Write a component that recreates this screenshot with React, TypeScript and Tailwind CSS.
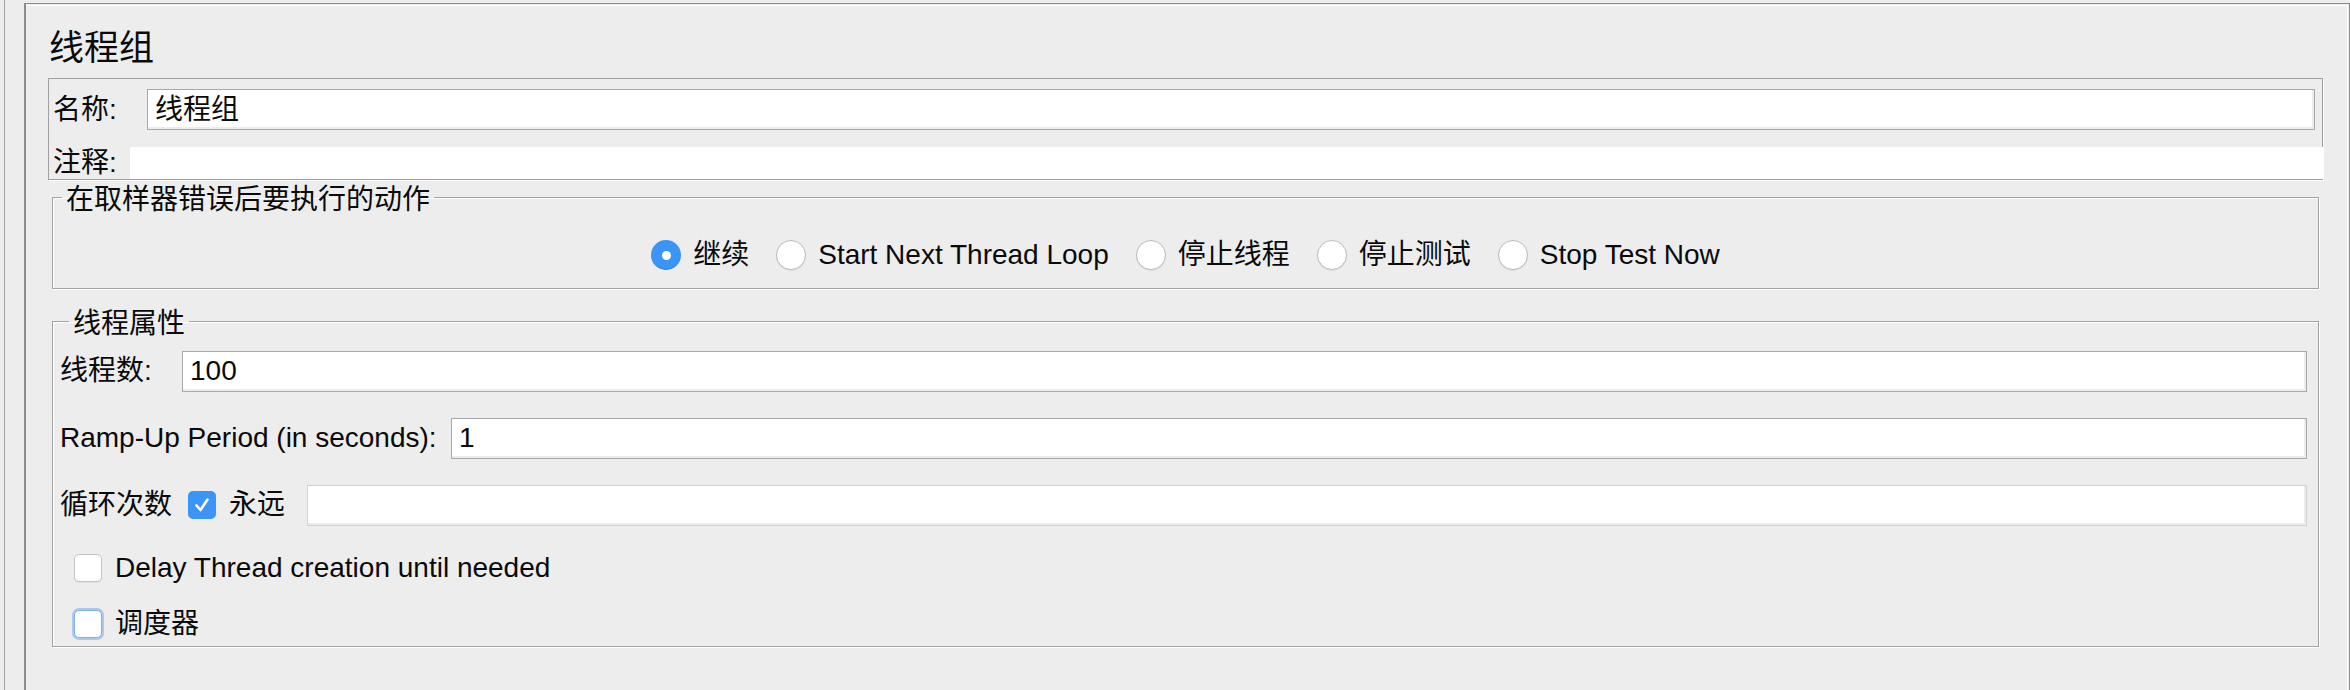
import React from 'react'

type FieldProps = { value?: string; disabled?: boolean; className?: string }

function TextField({ value, disabled, className = '' }: FieldProps) {
  return (
    <div
      className={`h-[41px] bg-white border flex items-center pl-[7px] shadow-[inset_-2px_-2px_0_#ececec] ${
        disabled ? 'border-[#d2d2d2]' : 'border-[#a9a9a9]'
      } ${className}`}
    >
      {value}
    </div>
  )
}

function Radio({ checked, label }: { checked?: boolean; label: string }) {
  return (
    <div className="flex items-center gap-[12px] whitespace-nowrap">
      {checked ? (
        <span className="w-[30px] h-[30px] rounded-full bg-[#3b95f7] shadow-[inset_0_-1px_1px_rgba(0,0,0,0.12)] flex items-center justify-center">
          <span className="w-[9px] h-[9px] rounded-full bg-white" />
        </span>
      ) : (
        <span className="w-[30px] h-[30px] rounded-full bg-white border border-[#bcbcbc] shadow-[0_1px_1px_rgba(0,0,0,0.08)]" />
      )}
      <span>{label}</span>
    </div>
  )
}

function Checkbox({ checked, focused }: { checked?: boolean; focused?: boolean }) {
  if (checked) {
    return (
      <span className="w-[28px] h-[28px] rounded-[5px] bg-[#3b94f6] flex items-center justify-center shrink-0">
        <svg width="20" height="20" viewBox="0 0 20 20" fill="none">
          <polyline points="4.5,10.5 8.5,15 15.5,4.5" stroke="#fff" strokeWidth="2.6" strokeLinecap="round" strokeLinejoin="round" />
        </svg>
      </span>
    )
  }
  return (
    <span
      className={`w-[28px] h-[28px] rounded-[5px] bg-white border shrink-0 ${
        focused
          ? 'border-[#7eb0ec] shadow-[0_0_0_2px_rgba(120,170,236,0.55)]'
          : 'border-[#c3c3c3] shadow-[0_1px_1px_rgba(0,0,0,0.06)]'
      }`}
    />
  )
}

const actions = [
  { label: '继续', checked: true },
  { label: 'Start Next Thread Loop' },
  { label: '停止线程' },
  { label: '停止测试' },
  { label: 'Stop Test Now' },
]

export default function App() {
  return (
    <div className="flex h-[690px] w-full overflow-hidden bg-[#ededed] text-[28px] text-[#0a0a0a] whitespace-nowrap [font-family:'Liberation_Sans','Noto_Sans_CJK_SC',sans-serif]">
      <div className="w-[4px] shrink-0" />
      <div className="w-px shrink-0 bg-[#a6a6a6]" />
      <div className="w-[19px] shrink-0" />

      <div className="flex-1 mt-[3px] border-l-2 border-t border-r border-[#8c8c8c] pt-px pr-px">
        <div className="h-full border-t border-r border-white pl-[22px] pr-[24px]">
          {/* title */}
          <div className="h-[72px] pt-[17px] pl-px text-[35px] leading-[44px] [font-family:'Noto_Sans_CJK_SC',sans-serif]">
            线程组
          </div>

          {/* name / comment */}
          <div className="border border-[#a0a0a0] shadow-[1px_1px_0_#fff]">
            <div className="flex items-start pt-[10px] pr-[7px]">
              <div className="w-[98px] pl-[4px] leading-[41px]">名称:</div>
              <TextField value="线程组" className="flex-1" />
            </div>
            <div className="flex mt-[17px] h-[32px] -mr-px">
              <div className="w-[81px] pl-[4px] leading-[32px]">注释:</div>
              <div className="flex-1 bg-white" />
            </div>
          </div>

          {/* on sampler error */}
          <fieldset className="mt-px mx-[4px] h-[108px] border border-[#a3a3a3] shadow-[inset_1px_1px_0_#fff,1px_1px_0_#fff]">
            <legend className="ml-[9px] px-[4px] pt-[5px] leading-[28px]">在取样器错误后要执行的动作</legend>
            <div className="flex items-center justify-center gap-[27px] pt-[7px] h-[75px]">
              {actions.map((a) => (
                <Radio key={a.label} label={a.label} checked={a.checked} />
              ))}
            </div>
          </fieldset>

          {/* thread properties */}
          <fieldset className="mt-[16px] mx-[4px] h-[342px] border border-[#a3a3a3] shadow-[inset_1px_1px_0_#fff,1px_1px_0_#fff] pl-[7px] pr-[11px]">
            <legend className="ml-[9px] px-[4px] pt-[5px] leading-[28px]">线程属性</legend>
            <div className="flex flex-col pt-[12px]">
              <div className="flex items-center">
                <div className="w-[122px]">线程数:</div>
                <TextField value="100" className="flex-1" />
              </div>
              <div className="flex items-center mt-[25px]">
                <div className="w-[391px]">Ramp-Up Period (in seconds):</div>
                <TextField value="1" className="flex-1" />
              </div>
              <div className="flex items-center mt-[25px]">
                <div className="w-[128px]">循环次数</div>
                <Checkbox checked />
                <div className="ml-[13px] w-[78px]">永远</div>
                <TextField disabled className="flex-1" />
              </div>
              <div className="flex items-center gap-[13px] mt-[28px] ml-[14px] h-[28px]">
                <Checkbox />
                <span>Delay Thread creation until needed</span>
              </div>
              <div className="flex items-center gap-[13px] mt-[28px] ml-[14px] h-[28px]">
                <Checkbox focused />
                <span>调度器</span>
              </div>
            </div>
          </fieldset>
        </div>
      </div>
    </div>
  )
}
